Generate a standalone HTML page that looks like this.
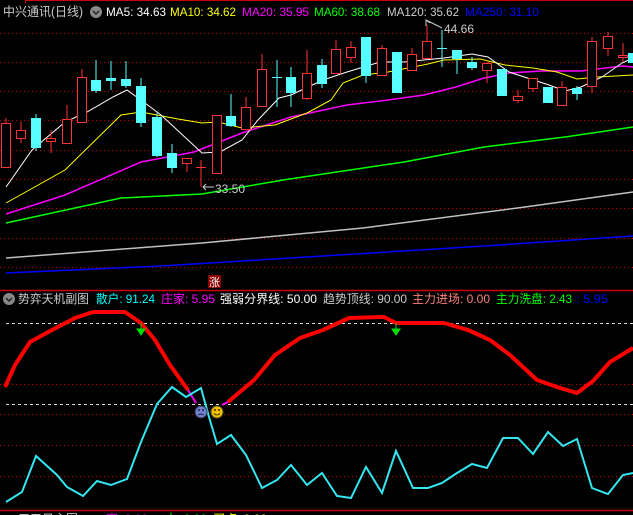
<!DOCTYPE html>
<html><head><meta charset="utf-8"><style>
body{margin:0;background:#000;}
svg{display:block;font-family:"Liberation Sans","Noto Sans CJK SC",sans-serif;font-size:12px;}
</style></head><body>
<svg width="633" height="515" viewBox="0 0 633 515" xmlns="http://www.w3.org/2000/svg">
<rect width="633" height="515" fill="#000"/>
<line x1="25" y1="0.5" x2="633" y2="0.5" stroke="#c00" stroke-width="1"/>
<line x1="25.5" y1="0" x2="25.5" y2="3" stroke="#c00"/>
<g stroke="#c00" stroke-width="1" stroke-dasharray="1,3">
<line x1="0" y1="33.5" x2="633" y2="33.5"/><line x1="0" y1="62.5" x2="633" y2="62.5"/>
<line x1="0" y1="91.5" x2="633" y2="91.5"/><line x1="0" y1="120.5" x2="633" y2="120.5"/>
<line x1="0" y1="150.5" x2="633" y2="150.5"/><line x1="0" y1="179.5" x2="633" y2="179.5"/>
<line x1="0" y1="208.5" x2="633" y2="208.5"/><line x1="0" y1="238.5" x2="633" y2="238.5"/>
<line x1="0" y1="267.5" x2="633" y2="267.5"/>
<line x1="0" y1="384.5" x2="633" y2="384.5"/><line x1="0" y1="414.5" x2="633" y2="414.5"/>
<line x1="0" y1="445.5" x2="633" y2="445.5"/><line x1="0" y1="476.5" x2="633" y2="476.5"/>
</g>
<g stroke="#ddd" stroke-width="1" stroke-dasharray="3,3">
<line x1="6" y1="323.5" x2="633" y2="323.5"/><line x1="6" y1="404.5" x2="633" y2="404.5"/>
</g>
<line x1="0" y1="290.5" x2="633" y2="290.5" stroke="#c00" stroke-width="1.5"/>
<line x1="0" y1="510.5" x2="633" y2="510.5" stroke="#c00" stroke-width="1.5"/>

<g fill="none" stroke-width="1">
<polyline stroke="#0000ff" stroke-width="1.5" points="6,273 161,266 323,256 484,246 633,236"/>
<polyline stroke="#c0c0c0" stroke-width="1.5" points="6,258 202,243 363,228 525,207 633,192"/>
<polyline stroke="#00ff00" stroke-width="1.5" points="6,223 121,198 202,194 283,180 404,162 484,147 565,137 633,127"/>
<polyline stroke="#ff00ff" stroke-width="1.5" points="6,214 65,195 141,162 194,152 242,133 291,117 347,105 388,100 424,95 456,87 484,78 509,73 541,71 581,71 622,66 633,67"/>
<polyline stroke="#ffff00" points="6,203 65,170 121,115 141,112 178,119 202,123 218,122 242,128 275,125 307,113 331,100 343,83 363,75 388,72 428,64 444,60 480,59 505,65 533,68 557,72 577,79 598,77 633,75"/>
<polyline stroke="#ffffff" points="6,187 32,150 65,122 87,112 113,97 127,90 145,103 161,115 202,153 220,152 242,140 258,120 279,98 291,95 323,80 347,72 380,62 404,62 444,58 472,54 488,57 509,72 549,85 565,91 581,87 602,77 622,63 633,58"/>
</g>

<g stroke-width="1">
<g stroke="#ff3333" fill="#000">
<line x1="6" y1="118" x2="6" y2="123"/><rect x="1.5" y="123.5" width="9" height="44"/>
<line x1="21" y1="122" x2="21" y2="143"/><rect x="16.5" y="130.5" width="9" height="8"/>
<line x1="51" y1="130" x2="51" y2="153"/><rect x="46.5" y="138.5" width="9" height="3"/>
<line x1="67" y1="105" x2="67" y2="143"/><rect x="62.5" y="119.5" width="9" height="24"/>
<line x1="82" y1="69" x2="82" y2="122"/><rect x="77.5" y="77.5" width="9" height="45"/>
<line x1="187" y1="158" x2="187" y2="172"/><rect x="182.5" y="158.5" width="9" height="5"/>
<line x1="201" y1="160" x2="201" y2="187"/><line x1="196" y1="167.5" x2="206" y2="167.5"/>
<rect x="212.5" y="115.5" width="9" height="58"/>
<line x1="246" y1="97" x2="246" y2="107"/><rect x="241.5" y="107.5" width="9" height="22"/>
<line x1="262" y1="54" x2="262" y2="69"/><rect x="257.5" y="69.5" width="9" height="37"/>
<line x1="307" y1="50" x2="307" y2="100"/><rect x="302.5" y="73.5" width="9" height="25"/>
<line x1="336" y1="40" x2="336" y2="73"/><rect x="331.5" y="49.5" width="9" height="24"/>
<line x1="351" y1="41" x2="351" y2="63"/><rect x="346.5" y="47.5" width="9" height="10"/>
<line x1="382" y1="45" x2="382" y2="75"/><rect x="377.5" y="48.5" width="9" height="27"/>
<line x1="412" y1="48" x2="412" y2="70"/><rect x="407.5" y="54.5" width="9" height="16"/>
<line x1="427" y1="25" x2="427" y2="41"/><rect x="422.5" y="41.5" width="9" height="17"/>
<line x1="487" y1="62" x2="487" y2="83"/><rect x="482.5" y="63.5" width="9" height="7"/>
<line x1="518" y1="90" x2="518" y2="103"/><rect x="513.5" y="96.5" width="9" height="4"/>
<line x1="533" y1="78" x2="533" y2="92"/><rect x="528.5" y="78.5" width="9" height="10"/>
<line x1="562" y1="81" x2="562" y2="106"/><rect x="557.5" y="87.5" width="9" height="18"/>
<line x1="592" y1="37" x2="592" y2="93"/><rect x="587.5" y="41.5" width="9" height="45"/>
<line x1="608" y1="32" x2="608" y2="56"/><rect x="603.5" y="36.5" width="9" height="12"/>
<line x1="623" y1="43" x2="623" y2="62"/><rect x="618.5" y="55.5" width="9" height="2"/>
</g>
<g stroke="#55ffff" fill="#55ffff">
<line x1="36" y1="114" x2="36" y2="151"/><rect x="31.5" y="118.5" width="9" height="29"/>
<line x1="96" y1="60" x2="96" y2="93"/><rect x="91.5" y="80.5" width="9" height="10"/>
<line x1="111" y1="61" x2="111" y2="90"/><rect x="106.5" y="78.5" width="9" height="2"/>
<line x1="126" y1="61" x2="126" y2="88"/><rect x="121.5" y="79.5" width="9" height="6"/>
<line x1="141" y1="78" x2="141" y2="127"/><rect x="136.5" y="86.5" width="9" height="36"/>
<line x1="157" y1="113" x2="157" y2="157"/><rect x="152.5" y="117.5" width="9" height="38"/>
<line x1="172" y1="144" x2="172" y2="173"/><rect x="167.5" y="153.5" width="9" height="14"/>
<line x1="231" y1="94" x2="231" y2="127"/><rect x="226.5" y="116.5" width="9" height="9"/>
<line x1="277" y1="60" x2="277" y2="107"/><line x1="272" y1="77.5" x2="282" y2="77.5"/>
<line x1="291" y1="67" x2="291" y2="107"/><rect x="286.5" y="77.5" width="9" height="15"/>
<line x1="322" y1="59" x2="322" y2="88"/><rect x="317.5" y="65.5" width="9" height="18"/>
<line x1="366" y1="37" x2="366" y2="83"/><rect x="361.5" y="37.5" width="9" height="38"/>
<line x1="397" y1="52" x2="397" y2="92"/><rect x="392.5" y="52.5" width="9" height="40"/>
<line x1="442" y1="30" x2="442" y2="67"/><line x1="437" y1="48.5" x2="447" y2="48.5"/>
<line x1="457" y1="50" x2="457" y2="74"/><rect x="452.5" y="50.5" width="9" height="8"/>
<line x1="472" y1="57" x2="472" y2="70"/><rect x="467.5" y="62.5" width="9" height="5"/>
<line x1="502" y1="69" x2="502" y2="96"/><rect x="497.5" y="69.5" width="9" height="26"/>
<line x1="548" y1="87" x2="548" y2="102"/><rect x="543.5" y="87.5" width="9" height="15"/>
<line x1="577" y1="86" x2="577" y2="100"/><rect x="572.5" y="88.5" width="9" height="5"/>
<rect x="628.5" y="53.5" width="9" height="9"/>
</g>
</g>
<g fill="#ccc" font-size="12">
<text x="444" y="33">44.66</text>
<text x="215" y="193">33.50</text>
</g>
<polyline points="430,23 426,20 426,26" fill="none" stroke="#ccc"/>
<line x1="426" y1="20" x2="442" y2="28" stroke="#ccc"/>
<line x1="203" y1="187" x2="214" y2="187" stroke="#ccc"/><polyline points="206,184 203,187 206,190" fill="none" stroke="#ccc"/>
<rect x="208" y="275" width="13" height="13" fill="#8b0000"/>
<text x="209" y="286" fill="#fff" font-size="11">涨</text>

<text x="3" y="16" fill="#ccc" font-size="12.5" textLength="80" lengthAdjust="spacingAndGlyphs">中兴通讯(日线)</text>
<circle cx="96" cy="12" r="6" fill="#888"/><polyline points="93,11 96,14 99,11" fill="none" stroke="#222" stroke-width="1.5"/>
<g font-size="12">
<text x="106" y="16" fill="#fff" textLength="60" lengthAdjust="spacingAndGlyphs">MA5: 34.63</text>
<text x="170" y="16" fill="#ffff00" textLength="66" lengthAdjust="spacingAndGlyphs">MA10: 34.62</text>
<text x="242" y="16" fill="#ff00ff" textLength="67" lengthAdjust="spacingAndGlyphs">MA20: 35.95</text>
<text x="314" y="16" fill="#00ff00" textLength="66" lengthAdjust="spacingAndGlyphs">MA60: 38.68</text>
<text x="387" y="16" fill="#ccc" textLength="72" lengthAdjust="spacingAndGlyphs">MA120: 35.62</text>
<text x="465" y="16" fill="#0000ff" textLength="74" lengthAdjust="spacingAndGlyphs">MA250: 31.10</text>
</g>

<circle cx="9" cy="299" r="6" fill="#888"/><polyline points="6,298 9,301 12,298" fill="none" stroke="#222" stroke-width="1.5"/>
<g font-size="12">
<text x="18" y="303" fill="#ccc" textLength="71" lengthAdjust="spacingAndGlyphs">势弈天机副图</text>
<text x="96" y="303" fill="#00ffff" textLength="59" lengthAdjust="spacingAndGlyphs">散户: 91.24</text>
<text x="161" y="303" fill="#ff00ff" textLength="54" lengthAdjust="spacingAndGlyphs">庄家: 5.95</text>
<text x="220" y="303" fill="#fff" textLength="97" lengthAdjust="spacingAndGlyphs">强弱分界线: 50.00</text>
<text x="323" y="303" fill="#ccc" textLength="84" lengthAdjust="spacingAndGlyphs">趋势顶线: 90.00</text>
<text x="412" y="303" fill="#ff8080" textLength="78" lengthAdjust="spacingAndGlyphs">主力进场: 0.00</text>
<text x="496" y="303" fill="#00ff00" textLength="76" lengthAdjust="spacingAndGlyphs">主力洗盘: 2.43</text>
<text x="576" y="303" fill="#0000ff" textLength="32" lengthAdjust="spacingAndGlyphs">: 5.95</text>
</g>

<polyline fill="none" stroke="#ff0000" stroke-width="4" stroke-linejoin="round" points="5,387 15,365 30,342 52,330 75,318 93,312 125,312 141,323 155,340 170,365 188,390"/>
<polyline fill="none" stroke="#ff00ff" stroke-width="2" points="188,390 196,403"/>
<polyline fill="none" stroke="#ff00ff" stroke-width="2" points="222,405 228,402"/>
<polyline fill="none" stroke="#ff0000" stroke-width="4" stroke-linejoin="round" points="228,402 254,380 275,355 300,338 323,330 349,318 384,317 396,323 444,323 468,330 490,340 510,355 537,380 560,388 577,393 593,381 610,362 633,348"/>
<g fill="#00dd00" stroke="#00dd00">
<line x1="141" y1="323" x2="141" y2="331"/><polygon points="137,329 145,329 141,335"/>
<line x1="396" y1="323" x2="396" y2="331"/><polygon points="392,329 400,329 396,335"/>
</g>
<polyline fill="none" stroke="#33e6f0" stroke-width="2" points="6,502 22,492 36,456 57,475 67,487 83,496 97,481 111,485 127,479 141,442 157,404 172,387 186,397 201,388 209,417 217,444 231,435 246,455 262,488 277,480 291,465 307,485 322,473 337,496 351,498 366,467 382,493 396,451 413,488 428,488 442,483 457,473 472,464 487,468 503,438 518,438 533,454 548,432 563,446 577,439 592,488 608,494 623,475 633,473"/>
<circle cx="201" cy="412" r="6" fill="#7080d0" stroke="#334"/>
<circle cx="217" cy="412" r="6" fill="#f0c000" stroke="#553"/>
<g fill="#000"><circle cx="199" cy="410" r="0.9"/><circle cx="203" cy="410" r="0.9"/><circle cx="215" cy="410" r="0.9"/><circle cx="219" cy="410" r="0.9"/></g>
<path d="M198.5,415 Q201,413 203.5,415" fill="none" stroke="#000" stroke-width="0.8"/>
<path d="M214,413.5 Q217,416.5 220,413.5" fill="none" stroke="#000" stroke-width="0.8"/>

<circle cx="8" cy="520" r="5" fill="#888"/>
<text x="18" y="523" fill="#ccc" font-size="12">三五日主图</text>
<text x="106" y="523" fill="#ff00ff" font-size="12">高: 0.00</text>
<text x="165" y="523" fill="#00ff00" font-size="12">中: 0.00</text>
<text x="213" y="523" fill="#ffff00" font-size="12">买点: 0.00</text>
</svg>
</body></html>
